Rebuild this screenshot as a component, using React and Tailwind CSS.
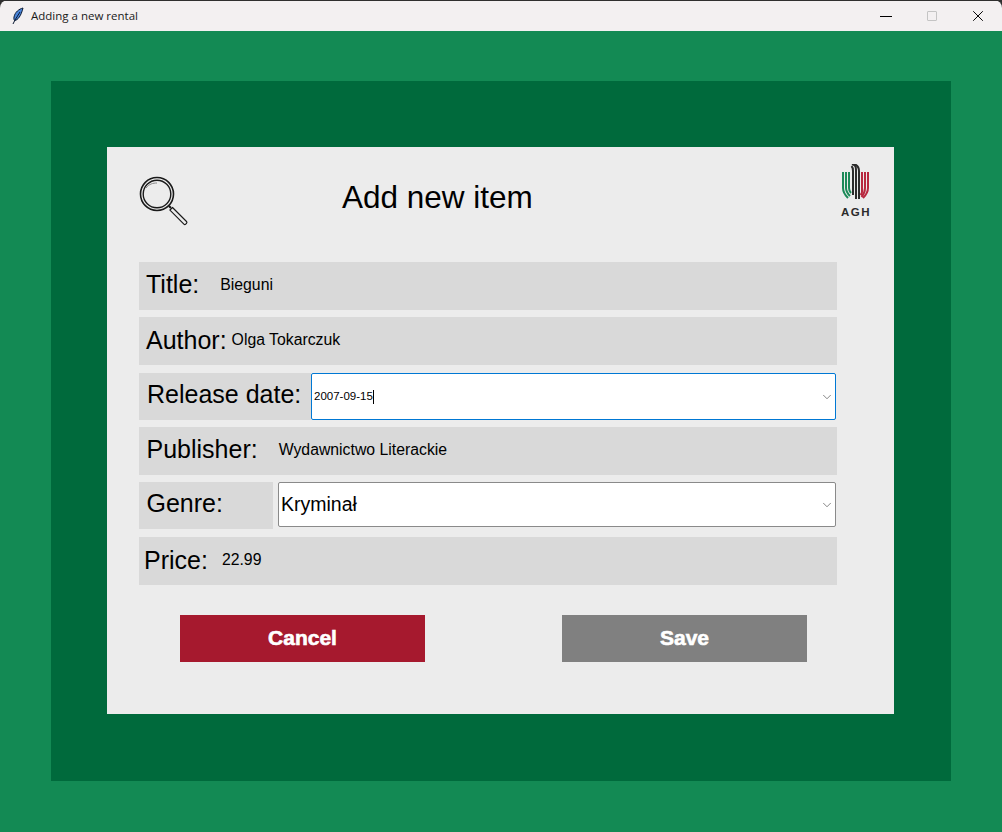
import React from 'react';
import { X, ChevronDown } from 'lucide-react';

const Feather = () => (
  <svg width="14" height="18" viewBox="0 0 14 18" fill="none">
    <path d="M12 1C8 2 4 5 3 10c-.3 1.600 0 3 .6 3.600C7 13 10 9 12 1Z" fill="#4a86dc" stroke="#0b1a33" strokeWidth="1" />
    <path d="M9 5 4 13 2 17" stroke="#0b1a33" strokeWidth="1" />
  </svg>
);

const Magnifier = () => (
  <svg width="50" height="50" viewBox="0 0 50 50" fill="none" stroke="#1a1a1a">
    <circle cx="18" cy="18" r="16.500" strokeWidth="1.600" />
    <circle cx="18" cy="18" r="13.800" strokeWidth="1.400" />
    <path d="M7 12c3-4 7-5 11-5" stroke="#888" strokeWidth="1" />
    <path d="M30 30l2 2" strokeWidth="2.200" />
    <path d="M33.500 31.500l14 14a1.300 1.300 0 0 1 0 1.800l-.8.8a1.300 1.300 0 0 1-1.800 0l-14-14Z" strokeWidth="1.200" />
  </svg>
);

const AghLogo = () => (
  <div className="flex w-[28px] flex-col items-center">
    <svg width="28" height="36" viewBox="0 0 28 36" fill="none" strokeWidth="2">
      <g stroke="#1c8a58">
        <path d="M1 8v16c0 4 2 7 5 10" />
        <path d="M4 8v16c0 3 2 6 4 8" />
        <path d="M7 8v16c0 2 1 4 2 5" />
      </g>
      <g stroke="#2b2b2b">
        <path d="M10 0c3 1 4 2 4 6v29" />
        <path d="M12 0c3 1 5 3 5 7v28" />
        <path d="M9.500 2c1 1 1.500 2 1.500 5v24" />
      </g>
      <g stroke="#b8283f">
        <path d="M20 8v20c0 1-.5 2-1.500 3" />
        <path d="M23 8v16c0 3-1 6-3.500 9" />
        <path d="M26 8v16c0 4-2 7-5 10" />
      </g>
    </svg>
    <span className="mt-[7px] text-[11.500px] leading-[10px] font-bold tracking-[1.500px] whitespace-nowrap text-[#2b2b2b]">AGH</span>
  </div>
);

const Row = ({ label, labelClass, value, valueClass, rowClass }) => (
  <div className={`flex h-[48px] w-[698px] items-center bg-[#d9d9d9] ${rowClass}`}>
    <span className={`text-[25px] leading-none text-black ${labelClass}`}>{label}</span>
    <span className={`text-[15.800px] leading-none text-black ${valueClass}`}>{value}</span>
  </div>
);

export default function App() {
  return (
    <div className="h-[832px] w-[1002px] overflow-hidden bg-[#2f2f2f] font-['Liberation_Sans',sans-serif]">
      <div className="flex h-full flex-col overflow-hidden rounded-t-lg">
        <div className="mt-px flex h-[30px] shrink-0 items-center bg-[#f3f0f1] pl-[11px]">
          <Feather />
          <span className="ml-[6px] font-['Open_Sans',sans-serif] text-[11.500px] text-[#1a1a1a]">Adding a new rental</span>
          <div className="ml-auto flex items-center">
            <span className="mr-[35px] h-px w-[12px] bg-black" />
            <span className="mr-[32px] h-[10px] w-[10px] rounded-[1px] border border-[#c4c4c4]" />
            <X size={18} strokeWidth={1.300} className="mr-[15px] text-black" />
          </div>
        </div>

        <div className="flex-1 bg-[#138a54] px-[51px] pt-[50px]">
          <div className="h-[700px] w-[900px] bg-[#006a3c] px-[56px] pt-[66px]">
            <div className="h-[567px] w-[787px] bg-[#ececec] px-[32px]">
              <div className="flex h-[115px] items-center">
                <div className="mt-[-7px] w-[203px]"><Magnifier /></div>
                <h1 className="mt-[-14px] text-[31.500px] leading-none text-black">Add new item</h1>
                <div className="ml-auto mr-[-8px] mt-[-28px]"><AghLogo /></div>
              </div>

              <Row label="Title:" labelClass="ml-[7px] mb-[3px]" value="Bieguni" valueClass="ml-[21px] mb-[2px]" />
              <Row label="Author:" labelClass="ml-[7px] mb-[1px]" value="Olga Tokarczuk" valueClass="ml-[5px] mb-[3px]" rowClass="mt-[7px]" />

              <div className="mt-[8px] flex h-[47px] w-[697px] items-center">
                <div className="flex h-full w-[172px] items-center bg-[#d9d9d9] pl-[8px]">
                  <span className="mb-[4px] text-[25px] leading-none text-black">Release date:</span>
                </div>
                <div className="flex h-full flex-1 items-center rounded-[2px] border border-[#0078d4] bg-white pl-[2px] pr-[1px]">
                  <span className="text-[11.500px] leading-none text-black">2007-09-15</span>
                  <span className="h-[14px] w-px bg-black" />
                  <ChevronDown size={14} strokeWidth={1.100} className="ml-auto text-[#444]" />
                </div>
              </div>

              <Row label="Publisher:" labelClass="ml-[7.500px] mb-[3px]" value="Wydawnictwo Literackie" valueClass="ml-[21px] mb-[2px]" rowClass="mt-[7px]" />

              <div className="mt-[7px] flex h-[47px] w-[697px] items-center">
                <div className="flex h-full w-[134px] items-center bg-[#d9d9d9] pl-[7.500px]">
                  <span className="mb-[5px] text-[25px] leading-none text-black">Genre:</span>
                </div>
                <div className="ml-[5px] mb-[2px] flex h-[45px] flex-1 items-center rounded-[2px] border border-[#8a8a8a] bg-white pl-[2px] pr-[1px]">
                  <span className="text-[19.500px] leading-none text-black">Kryminał</span>
                  <ChevronDown size={14} strokeWidth={1.100} className="ml-auto text-[#444]" />
                </div>
              </div>

              <Row label="Price:" labelClass="ml-[5px] mb-[1px]" value="22.99" valueClass="ml-[14px] mb-[3px]" rowClass="mt-[8px]" />

              <div className="mt-[30px] flex w-[698px] pl-[41px]">
                <button className="h-[47px] w-[245px] bg-[#a6192e] pb-[1px] text-[21px] font-bold text-white [-webkit-text-stroke:0.6px_white]">Cancel</button>
                <button className="ml-[137px] h-[47px] w-[245px] bg-[#808080] pb-[1px] text-[21px] font-bold text-white [-webkit-text-stroke:0.6px_white]">Save</button>
              </div>
            </div>
          </div>
        </div>
      </div>
    </div>
  );
}
